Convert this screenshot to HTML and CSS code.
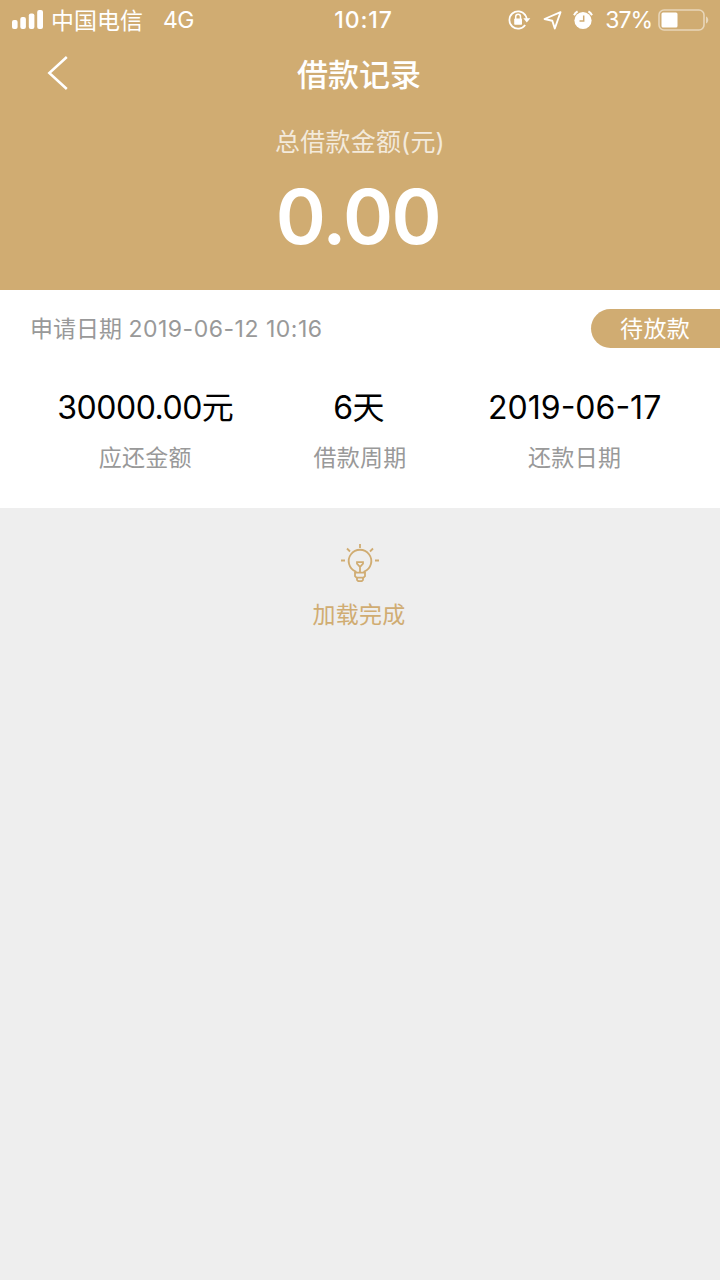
FILE: index.html
```html
<!DOCTYPE html>
<html lang="zh-CN">
<head>
  <meta charset="UTF-8">
  <meta name="viewport" content="width=device-width, initial-scale=1.0">
  <title>借款记录</title>
  <link rel="stylesheet" href="styles.css">
</head>
<body>
  <header class="header">
    <!-- 状态栏 -->
    <div class="status-bar">
      <div class="status-left">
        <svg class="signal" width="32" height="20" viewBox="0 0 32 20" fill="#fff">
          <rect x="0" y="10" width="5.600" height="9" rx="2"/>
          <rect x="8.300" y="7" width="5.600" height="12" rx="2"/>
          <rect x="16.800" y="3.500" width="5.600" height="15.500" rx="2"/>
          <rect x="25.200" y="0" width="5.800" height="19" rx="2"/>
        </svg>
        <span class="carrier">中国电信</span>
        <span class="network">4G</span>
      </div>
      <span class="time">10:17</span>
      <div class="status-right">
        <svg class="lock" width="23" height="20" viewBox="0 0 23 20" fill="none" stroke="#fff" stroke-width="1.700">
          <path d="M17.200 5A8.700 8.700 0 1 0 17.200 15"/>
          <path d="M15.300 8.300h7l-3.500 4.200z" fill="#fff" stroke="none"/>
          <path d="M16.600 4.300a9 9 0 0 1 2.200 4.500"/>
          <rect x="6.200" y="8.500" width="7.800" height="6.200" rx=".8" fill="#fff" stroke="none"/>
          <path d="M7.700 9V6.700a2.400 2.400 0 0 1 4.800 0V9" stroke-width="1.500"/>
        </svg>
        <svg class="location" width="19" height="19" viewBox="0 0 19 19" fill="none" stroke="#fff" stroke-width="1.900" stroke-linejoin="round">
          <path d="M17.500 1.200L1.500 8l7.800 1.800 2.500 7.700z"/>
        </svg>
        <svg class="alarm" width="20" height="20" viewBox="0 0 20 20" fill="none" stroke="#fff">
          <circle cx="10" cy="10.500" r="8.600" fill="#fff" stroke="none"/>
          <path d="M1 5.200A9 9 0 0 1 4.600 1.300M19 5.200a9 9 0 0 0-3.600-3.900" stroke-width="2"/>
          <path d="M10.700 5.500v5.600H6.500" stroke="#d0ac72" stroke-width="1.500"/>
        </svg>
        <span class="percent">37%</span>
        <svg class="battery" width="51" height="22" viewBox="0 0 51 22">
          <rect x="1" y="1" width="45" height="20" rx="5" fill="none" stroke="#fff" stroke-opacity=".5" stroke-width="1.600"/>
          <rect x="3.500" y="3.500" width="16" height="15" rx="1.500" fill="#fff"/>
          <path d="M48 7.500c3 1.200 3 5.800 0 7z" fill="#fff" fill-opacity=".5"/>
        </svg>
      </div>
    </div>

    <!-- 导航栏 -->
    <div class="nav">
      <svg class="back" width="22" height="34" viewBox="0 0 22 34" fill="none" stroke="#fff" stroke-width="2.500">
        <path d="M19.800 1L2.300 17l17.500 16"/>
      </svg>
      <h1>借款记录</h1>
    </div>

    <p class="total-label">总借款金额(元)</p>
    <p class="total">0.00</p>
  </header>

  <!-- 借款记录 -->
  <section class="record">
    <div class="record-top">
      <span class="apply-date">申请日期 <span class="date">2019-06-12 10:16</span></span>
      <span class="status">待放款</span>
    </div>
    <div class="record-info">
      <div class="item">
        <p class="value amount">30000.00元</p>
        <p class="label">应还金额</p>
      </div>
      <div class="item">
        <p class="value days">6天</p>
        <p class="label">借款周期</p>
      </div>
      <div class="item">
        <p class="value">2019-06-17</p>
        <p class="label">还款日期</p>
      </div>
    </div>
  </section>

  <!-- 加载完成 -->
  <div class="loaded">
    <svg width="40" height="40" viewBox="0 0 40 40" fill="none" stroke="#d0ac72" stroke-width="1.800">
      <path d="M20 1v4M7 5.500l3 3M33 5.500l-3 3M1 17.500h4M35 17.500h4"/>
      <path d="M15.700 30v-1.500A11.300 11.300 0 1 1 24.300 28.500V30"/>
      <path d="M15 29.700h10v3.500l-1.500 1.500h-7L15 33.200zM17 34.700V37l1.200 1.200h3.600L23 37v-2.300"/>
      <path d="M17 19.200h6v1.500L20 24l-3-3.300zM20 24v5.500"/>
    </svg>
    <p>加载完成</p>
  </div>
</body>
</html>
```

FILE: styles.css
```css
* {
  box-sizing: border-box;
}
body {
  margin: 0;
  min-height: 100vh;
  background: #eee;
  font-family: Inter, "Noto Sans CJK SC", sans-serif;
  font-size: 23px;
}
h1, p {
  margin: 0;
}
svg {
  display: block;
  flex-shrink: 0;
}

/* 顶部 */
.header {
  height: 290px;
  background: #d0ac72;
  color: #fff;
  text-align: center;
}
.status-bar {
  display: grid;
  grid-template-columns: 1fr auto 1fr;
  align-items: center;
  height: 40px;
  padding: 0 11px 0 12px;
  line-height: 40px;
}
.status-left,
.status-right {
  display: flex;
  align-items: center;
}
.status-right {
  justify-content: flex-end;
}
.carrier {
  margin-left: 7px;
  padding-top: 2px;
  line-height: 38px;
}
.network {
  margin-left: 20px;
  letter-spacing: -0.5px;
}
.time {
  padding-left: 6px;
  font-weight: 500;
  letter-spacing: 0.9px;
}
.location {
  margin-left: 12px;
}
.alarm {
  margin-left: 11px;
}
.percent {
  margin-left: 12px;
  letter-spacing: -1px;
}
.battery {
  margin-left: 6px;
}

/* 导航 */
.nav {
  display: grid;
  grid-template-columns: 72px 1fr 72px;
  align-items: center;
  height: 66px;
  padding-right: 2px;
}
.back {
  margin-left: 47px;
}
.nav h1 {
  padding-top: 3px;
  font-size: 31px;
  font-weight: 500;
  line-height: 63px;
}
.total-label {
  padding-top: 2px;
  font-size: 25px;
  line-height: 68px;
  letter-spacing: 0.2px;
  color: rgba(255, 255, 255, 0.75);
}
.total {
  padding-right: 4px;
  font-size: 76px;
  font-weight: 600;
  line-height: 80px;
  letter-spacing: -1.5px;
}

/* 记录 */
.record {
  height: 218px;
  padding-top: 19px;
  background: #fff;
}
.record-top {
  display: flex;
  justify-content: space-between;
  line-height: 39px;
}
.apply-date {
  padding: 1px 0 0 30px;
  color: #999;
}
.date {
  letter-spacing: 0.5px;
}
.status {
  width: 129px;
  height: 39px;
  padding: 2px 0 0 29px;
  border-radius: 20px 0 0 20px;
  background: #d0ac72;
  color: #fff;
  line-height: 37px;
  letter-spacing: 0.4px;
}
.record-info {
  display: grid;
  grid-template-columns: repeat(3, 1fr);
  padding: 34px 38px 0 38px;
  text-align: center;
}
.value {
  font-size: 32px;
  line-height: 50px;
  color: #000;
}
.amount {
  letter-spacing: -0.5px;
}
.days {
  padding-right: 3px;
  letter-spacing: -0.8px;
}
.label {
  line-height: 50px;
  letter-spacing: 0.3px;
  color: #999;
}

/* 加载提示 */
.loaded {
  display: flex;
  flex-direction: column;
  align-items: center;
  padding-top: 35px;
  color: #d0ac72;
}
.loaded p {
  margin-top: 7px;
  padding-right: 2px;
  line-height: 50px;
  letter-spacing: 0.3px;
}
```
